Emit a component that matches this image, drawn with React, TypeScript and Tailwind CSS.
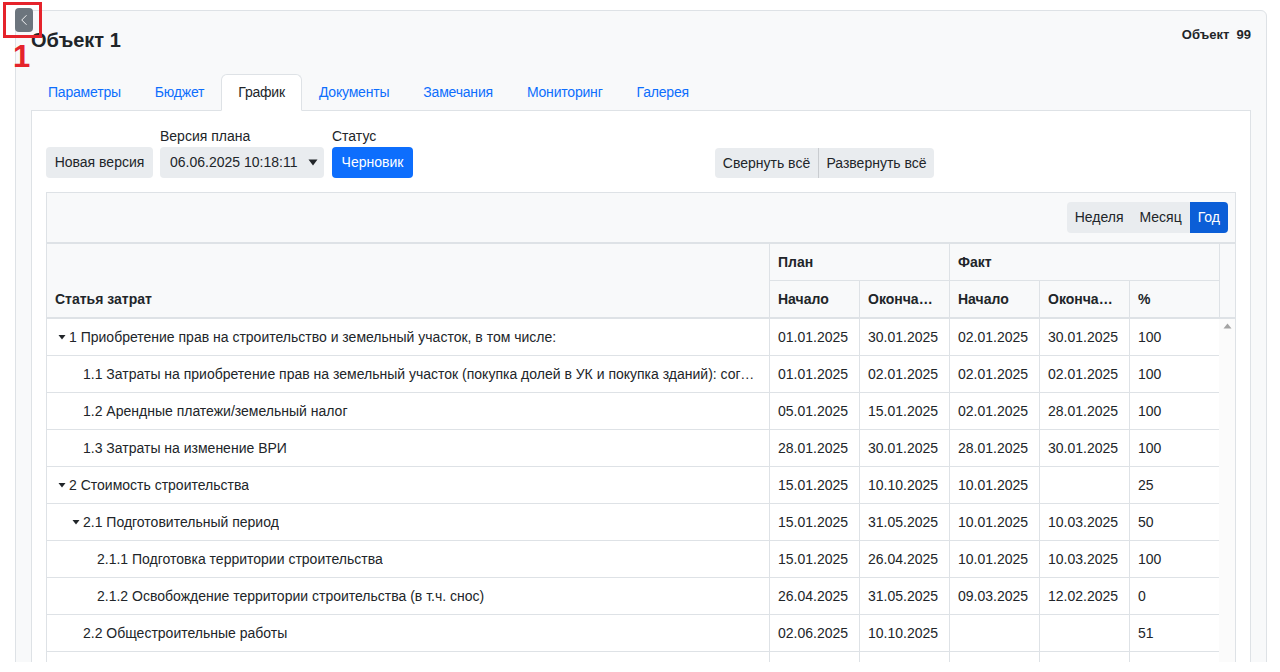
import { ChevronLeft } from "lucide-react";

type Row = {
  title: string;
  level: number;
  caret?: boolean;
  cells: string[];
};

const rows: Row[] = [
  {
    title: "1 Приобретение прав на строительство и земельный участок, в том числе:",
    level: 0,
    caret: true,
    cells: ["01.01.2025", "30.01.2025", "02.01.2025", "30.01.2025", "100"],
  },
  {
    title:
      "1.1 Затраты на приобретение прав на земельный участок (покупка долей в УК и покупка зданий): согласование",
    level: 1,
    cells: ["01.01.2025", "02.01.2025", "02.01.2025", "02.01.2025", "100"],
  },
  {
    title: "1.2 Арендные платежи/земельный налог",
    level: 1,
    cells: ["05.01.2025", "15.01.2025", "02.01.2025", "28.01.2025", "100"],
  },
  {
    title: "1.3 Затраты на изменение ВРИ",
    level: 1,
    cells: ["28.01.2025", "30.01.2025", "28.01.2025", "30.01.2025", "100"],
  },
  {
    title: "2 Стоимость строительства",
    level: 0,
    caret: true,
    cells: ["15.01.2025", "10.10.2025", "10.01.2025", "", "25"],
  },
  {
    title: "2.1 Подготовительный период",
    level: 1,
    caret: true,
    cells: ["15.01.2025", "31.05.2025", "10.01.2025", "10.03.2025", "50"],
  },
  {
    title: "2.1.1 Подготовка территории строительства",
    level: 2,
    cells: ["15.01.2025", "26.04.2025", "10.01.2025", "10.03.2025", "100"],
  },
  {
    title: "2.1.2 Освобождение территории строительства (в т.ч. снос)",
    level: 2,
    cells: ["26.04.2025", "31.05.2025", "09.03.2025", "12.02.2025", "0"],
  },
  {
    title: "2.2 Общестроительные работы",
    level: 1,
    cells: ["02.06.2025", "10.10.2025", "", "", "51"],
  },
  { title: "", level: 0, cells: ["", "", "", "", ""] },
];

const tabs = ["Параметры", "Бюджет", "График", "Документы", "Замечания", "Мониторинг", "Галерея"];

function Caret() {
  return (
    <svg width="8" height="6" viewBox="0 0 8 6" className="fill-[#212529]">
      <path d="M0.5 1 L7.5 1 L4 5.5 Z" />
    </svg>
  );
}

export default function App() {
  return (
    <div className="relative h-[672px] overflow-hidden bg-white font-['Liberation_Sans',Arial,sans-serif] text-[14px] text-[#212529]">
      <div className="h-[662px] overflow-hidden pl-[15px] pr-[13px] pt-[10px]">
        <div className="h-[700px] rounded-t-md border border-[#dee2e6] bg-[#f8f9fa] px-[15px]">
          {/* Header */}
          <div className="flex items-start justify-between pt-[16px]">
            <h1 className="text-[20px] font-semibold leading-[26px]">Объект 1</h1>
            <div className="mt-[-2px] text-[13px] font-semibold leading-[20px]">Объект&nbsp;&nbsp;99</div>
          </div>

          {/* Tabs */}
          <ul className="mt-[21px] flex border-b border-[#dee2e6]">
            {tabs.map((t) => (
              <li key={t} className="-mb-px">
                <span
                  className={`block rounded-t-md border px-4 py-[7px] leading-[21px] tracking-[-0.2px] ${
                    t === "График"
                      ? "border-[#dee2e6] border-b-white bg-white text-[#212529]"
                      : "border-transparent text-[#0d6efd]"
                  }`}
                >
                  {t}
                </span>
              </li>
            ))}
          </ul>

          {/* Tab content */}
          <div className="h-[600px] border-x border-[#dee2e6] bg-white px-[14px] pt-[15px]">
            <div className="flex items-end">
              <button className="h-[31px] w-[107px] rounded bg-[#e9ecef] leading-[21px]">Новая версия</button>
              <div className="ml-[7px]">
                <div className="leading-[21px]">Версия плана</div>
                <div className="flex h-[31px] w-[164px] items-center justify-between rounded bg-[#e9ecef] pl-[10px] pr-[6px]">
                  <span>06.06.2025 10:18:11</span>
                  <svg width="10" height="7" viewBox="0 0 10 7" className="fill-[#212529]">
                    <path d="M0.5 0.5 L9.5 0.5 L5 6.5 Z" />
                  </svg>
                </div>
              </div>
              <div className="ml-[8px]">
                <div className="leading-[21px]">Статус</div>
                <button className="h-[31px] w-[81px] rounded bg-[#0d6efd] text-white">Черновик</button>
              </div>
              <div className="ml-[302px] flex h-[30px] overflow-hidden rounded">
                <button className="w-[103px] bg-[#e9ecef]">Свернуть всё</button>
                <button className="w-[116px] border-l border-[#c9ccd0] bg-[#e9ecef]">Развернуть всё</button>
              </div>
            </div>

            {/* Table */}
            <div className="mt-[14px] border border-[#dee2e6] bg-[#f8f9fa]">
              <div className="flex h-[49px] items-start justify-end pr-[7px] pt-[9px]">
                <div className="flex h-[31px] overflow-hidden rounded">
                  <button className="bg-[#e9ecef] px-2">Неделя</button>
                  <button className="bg-[#e9ecef] px-2">Месяц</button>
                  <button className="bg-[#0b5ed7] px-2 text-white">Год</button>
                </div>
              </div>

              {/* Table header */}
              <div className="grid grid-cols-[722px_90px_90px_90px_90px_90px_16px] grid-rows-[37px_36px] border-y-2 border-[#dee2e6] font-bold">
                <div className="row-span-2 flex items-end px-2 pb-[7px]">Статья затрат</div>
                <div className="col-span-2 flex items-center border-b border-l border-[#dee2e6] px-2">План</div>
                <div className="col-span-3 flex items-center border-b border-l border-[#dee2e6] px-2">Факт</div>
                <div className="row-span-2 border-l border-[#dee2e6]" />
                <div className="flex items-center border-l border-[#dee2e6] px-2">Начало</div>
                <div className="flex items-center border-l border-[#dee2e6] px-2">
                  <span className="truncate">Окончание</span>
                </div>
                <div className="flex items-center border-l border-[#dee2e6] px-2">Начало</div>
                <div className="flex items-center border-l border-[#dee2e6] px-2">
                  <span className="truncate">Окончание</span>
                </div>
                <div className="flex items-center border-l border-[#dee2e6] px-2">%</div>
              </div>

              {/* Table body */}
              <div className="flex bg-white">
                <div className="w-[1172px]">
                  {rows.map((r, i) => (
                    <div
                      key={i}
                      className="grid h-[37px] grid-cols-[722px_90px_90px_90px_90px_90px] border-b border-[#dee2e6]"
                    >
                      <div className="flex min-w-0 items-center pr-2" style={{ paddingLeft: 8 + r.level * 14 }}>
                        <span className="flex w-[14px] shrink-0 justify-center pr-[1px]">
                          {r.caret && <Caret />}
                        </span>
                        <span className="truncate">{r.title}</span>
                      </div>
                      {r.cells.map((c, j) => (
                        <div key={j} className="flex items-center border-l border-[#dee2e6] px-2">
                          {c}
                        </div>
                      ))}
                    </div>
                  ))}
                </div>
                <div className="flex w-[16px] justify-center bg-[#fbfbfb] pt-[4px]">
                  <svg width="9" height="6" viewBox="0 0 9 6" className="fill-[#a3a3a3]">
                    <path d="M4.5 0.5 L8.5 5.5 L0.5 5.5 Z" />
                  </svg>
                </div>
              </div>
            </div>
          </div>
        </div>
      </div>

      {/* Back button with annotation */}
      <button className="absolute left-[15px] top-[8px] flex h-[24px] w-[18px] items-center justify-center rounded bg-[#6c757d] text-white">
        <ChevronLeft size={20} strokeWidth={1.2} />
      </button>
      <div className="absolute left-[3px] top-[2px] h-[36px] w-[39px] border-[3px] border-[#e5232b]" />
      <div className="absolute left-[13px] top-[41px] text-[31px] font-bold leading-none text-[#e5232b]">1</div>
    </div>
  );
}
